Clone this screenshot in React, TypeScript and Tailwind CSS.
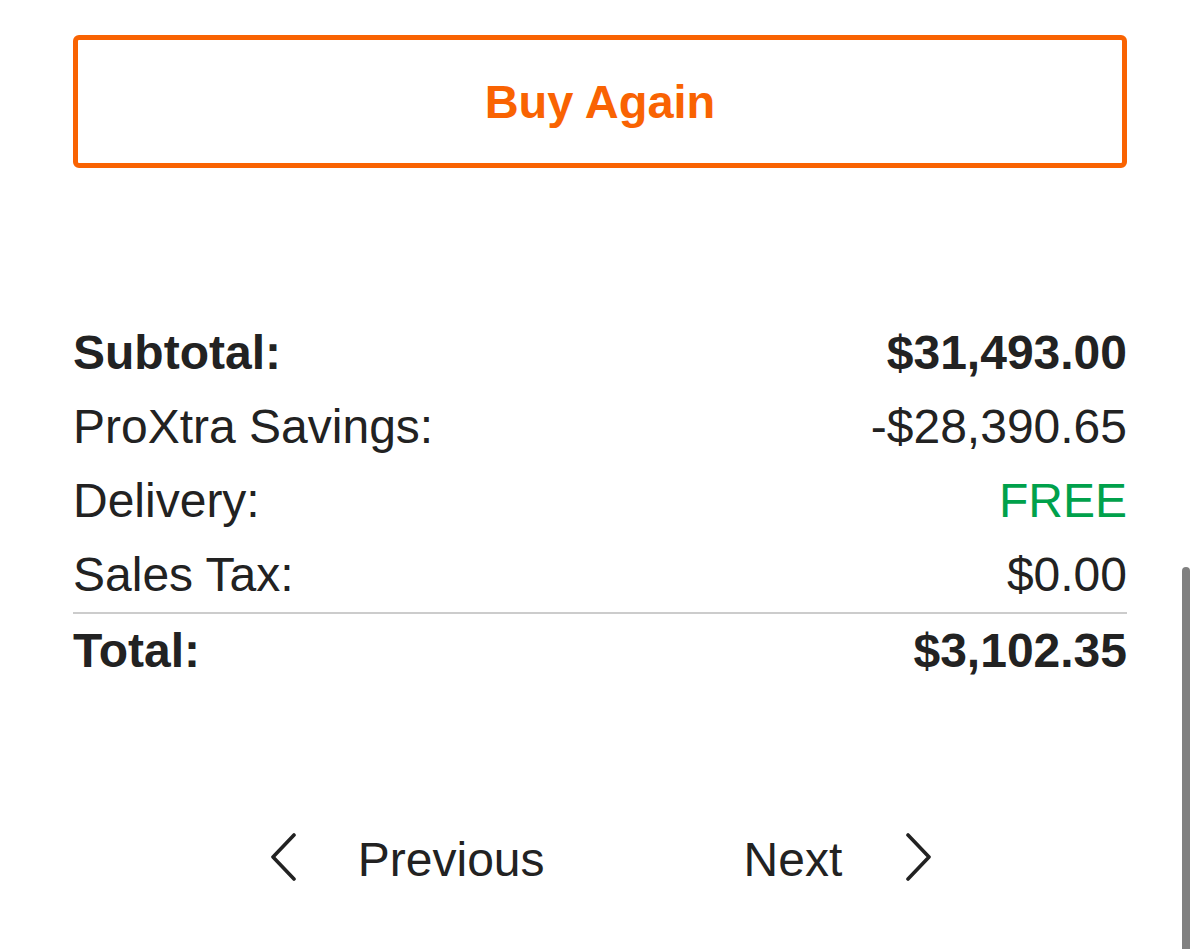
const rows = [
  { label: 'Subtotal:', value: '$31,493.00', bold: true },
  { label: 'ProXtra Savings:', value: '-$28,390.65' },
  { label: 'Delivery:', value: 'FREE', green: true },
  { label: 'Sales Tax:', value: '$0.00' },
]

function Chevron({ dir }: { dir: 'left' | 'right' }) {
  const d = dir === 'left' ? 'M24 2 L3 24 L24 46' : 'M3 2 L24 24 L3 46'
  return (
    <svg width={27} height={48} viewBox="0 0 27 48" className="mb-[6px] shrink-0">
      <path d={d} fill="none" stroke="#222222" strokeWidth={3.6} strokeLinecap="round" strokeLinejoin="round" />
    </svg>
  )
}

export default function App() {
  return (
    <div className="relative min-h-[949px] bg-white px-[73px] pt-[35px] text-[#222222] font-['Liberation_Sans',Arial,Helvetica,sans-serif] overflow-hidden">
      <button className="flex h-[133px] w-full items-center justify-center rounded-[6px] border-[5px] border-[#f96302] bg-white">
        <span className="text-[47px] font-bold leading-none text-[#f96302]">Buy Again</span>
      </button>

      <div className="mt-[148px] text-[48px] leading-[74px]">
        {rows.map(r => (
          <div key={r.label} className={`flex justify-between ${r.bold ? 'font-bold' : ''}`}>
            <span>{r.label}</span>
            <span className={r.green ? 'text-[#00a14b]' : ''}>{r.value}</span>
          </div>
        ))}
        <div className="flex justify-between border-t-2 border-[#cccccc] font-bold">
          <span>Total:</span>
          <span>$3,102.35</span>
        </div>
      </div>

      <div className="mt-[135px] flex items-center justify-center gap-[199px] pl-[2px] text-[48px] leading-[74px]">
        <button className="flex items-center gap-[61px]">
          <Chevron dir="left" />
          <span>Previous</span>
        </button>
        <button className="flex items-center gap-[63px]">
          <span>Next</span>
          <Chevron dir="right" />
        </button>
      </div>

      <div className="absolute right-[10px] top-[567px] h-[420px] w-[8px] rounded-full bg-[#808080]" />
    </div>
  )
}
